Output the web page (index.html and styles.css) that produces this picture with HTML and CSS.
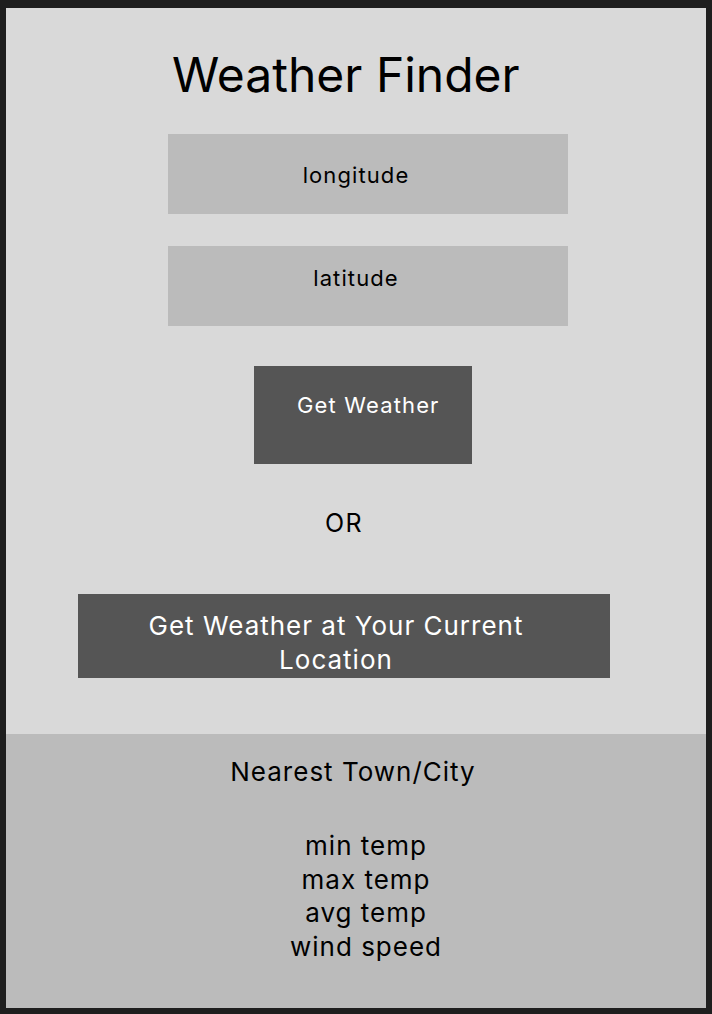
FILE: index.html
```html
<!DOCTYPE html>
<html lang="en">
<head>
<meta charset="utf-8">
<title>Weather Finder</title>
<link rel="stylesheet" href="styles.css">
</head>
<body>
<div class="frame">
  <section class="finder">
    <h1 class="title">Weather Finder</h1>
    <div class="field field-long"><span>longitude</span></div>
    <div class="field field-lat"><span>latitude</span></div>
    <div class="btn-get">Get Weather</div>
    <div class="or">OR</div>
    <div class="btn-loc"><span class="btn-loc-text">Get Weather at Your Current Location</span></div>
  </section>
  <section class="results">
    <div class="nearest">Nearest Town/City</div>
    <div class="stats">
      <div>min temp</div>
      <div>max temp</div>
      <div>avg temp</div>
      <div>wind speed</div>
    </div>
  </section>
</div>
</body>
</html>
```

FILE: styles.css
```css
html, body {
  margin: 0;
  padding: 0;
  background: #1e1e1e;
}
body {
  padding: 8px 6px 6px 6px;
  font-family: Inter, "Noto Sans", sans-serif;
  color: #000;
}
.frame {
  width: 700px;
  height: 1000px;
  background: #d9d9d9;
  display: flex;
  flex-direction: column;
}
.finder {
  height: 726px;
  padding-top: 38px;
  box-sizing: border-box;
  display: flex;
  flex-direction: column;
  align-items: flex-start;
}
.title {
  margin: 0 0 0 166px;
  font-size: 48px;
  font-weight: 400;
  line-height: 58px;
}
.field {
  margin-left: 162px;
  width: 400px;
  height: 80px;
  background: #bbbbbb;
  box-sizing: border-box;
  display: flex;
  justify-content: center;
  padding-right: 24px;
  font-size: 22px;
  line-height: 26px;
  letter-spacing: 1.1px;
}
.field-long {
  margin-top: 30px;
  padding-top: 28px;
}
.field-lat {
  margin-top: 32px;
  padding-top: 19px;
}
.btn-get {
  margin: 40px 0 0 248px;
  width: 218px;
  height: 98px;
  box-sizing: border-box;
  background: #555555;
  color: #fff;
  font-size: 22px;
  line-height: 26px;
  letter-spacing: 1.15px;
  padding: 26px 0 0 43px;
}
.or {
  margin: 45px 0 0 319px;
  font-size: 25px;
  line-height: 29px;
  letter-spacing: 1.5px;
}
.btn-loc {
  margin: 56px 0 0 72px;
  width: 532px;
  height: 84px;
  box-sizing: border-box;
  background: #555555;
  color: #fff;
  padding: 15px 0 0 58px;
  font-size: 26px;
  line-height: 34px;
  letter-spacing: 1px;
}
.btn-loc-text {
  display: block;
  width: 400px;
  text-align: center;
}
.results {
  flex: 1;
  background: #bbbbbb;
  display: flex;
  flex-direction: column;
  align-items: center;
  padding-top: 21px;
  font-size: 26px;
  line-height: 34px;
  letter-spacing: 1px;
}
.nearest {
  padding-right: 6px;
}
.stats {
  margin-top: 40px;
  padding-left: 20px;
  text-align: center;
  line-height: 33.6px;
}
```
